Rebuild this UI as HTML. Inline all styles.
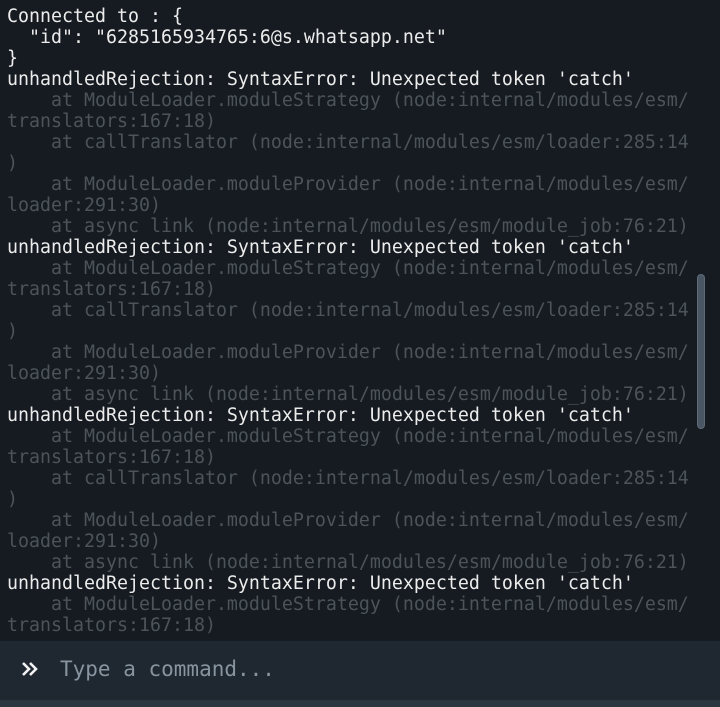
<!DOCTYPE html>
<html><head><meta charset="utf-8"><style>
html,body{margin:0;padding:0;width:720px;height:707px;overflow:hidden;background:#161b21;}
#log{position:absolute;left:7px;top:6px;width:700px;font-family:"DejaVu Sans Mono","Liberation Mono",monospace;font-size:18.27px;line-height:21px;white-space:pre;color:#ececec;}
.g{color:#4c535b;}
#bar{position:absolute;left:0;top:641px;width:720px;height:59px;background:#1f2830;}
#strip{position:absolute;left:0;top:700px;width:720px;height:7px;background:#2b3640;}
#ph{position:absolute;left:60px;top:654px;font-family:"DejaVu Sans Mono","Liberation Mono",monospace;font-size:21px;line-height:30px;color:#8894a0;white-space:pre;}
#pr{position:absolute;left:20px;top:659px;}
#sb{position:absolute;left:697px;top:274px;width:8px;height:155px;background:#4a5664;border:1px solid #5d6a78;border-radius:5px;box-sizing:border-box;}
</style></head><body>
<div id="log">Connected to : {
  "id": "6285165934765:6@s.whatsapp.net"
}
unhandledRejection: SyntaxError: Unexpected token 'catch'
<span class="g">    at ModuleLoader.moduleStrategy (node:internal/modules/esm/
translators:167:18)
    at callTranslator (node:internal/modules/esm/loader:285:14
)
    at ModuleLoader.moduleProvider (node:internal/modules/esm/
loader:291:30)
    at async link (node:internal/modules/esm/module_job:76:21)</span>
unhandledRejection: SyntaxError: Unexpected token 'catch'
<span class="g">    at ModuleLoader.moduleStrategy (node:internal/modules/esm/
translators:167:18)
    at callTranslator (node:internal/modules/esm/loader:285:14
)
    at ModuleLoader.moduleProvider (node:internal/modules/esm/
loader:291:30)
    at async link (node:internal/modules/esm/module_job:76:21)</span>
unhandledRejection: SyntaxError: Unexpected token 'catch'
<span class="g">    at ModuleLoader.moduleStrategy (node:internal/modules/esm/
translators:167:18)
    at callTranslator (node:internal/modules/esm/loader:285:14
)
    at ModuleLoader.moduleProvider (node:internal/modules/esm/
loader:291:30)
    at async link (node:internal/modules/esm/module_job:76:21)</span>
unhandledRejection: SyntaxError: Unexpected token 'catch'
<span class="g">    at ModuleLoader.moduleStrategy (node:internal/modules/esm/
translators:167:18)</span></div>
<div id="sb"></div>
<div id="bar"></div>
<div id="strip"></div>
<svg id="pr" width="20" height="20" viewBox="0 0 20 20"><path d="M3 4 L9 10 L3 16 M10 4 L16 10 L10 16" fill="none" stroke="#f2f2f2" stroke-width="2.6"/></svg>
<div id="ph">Type a command...</div>
</body></html>
